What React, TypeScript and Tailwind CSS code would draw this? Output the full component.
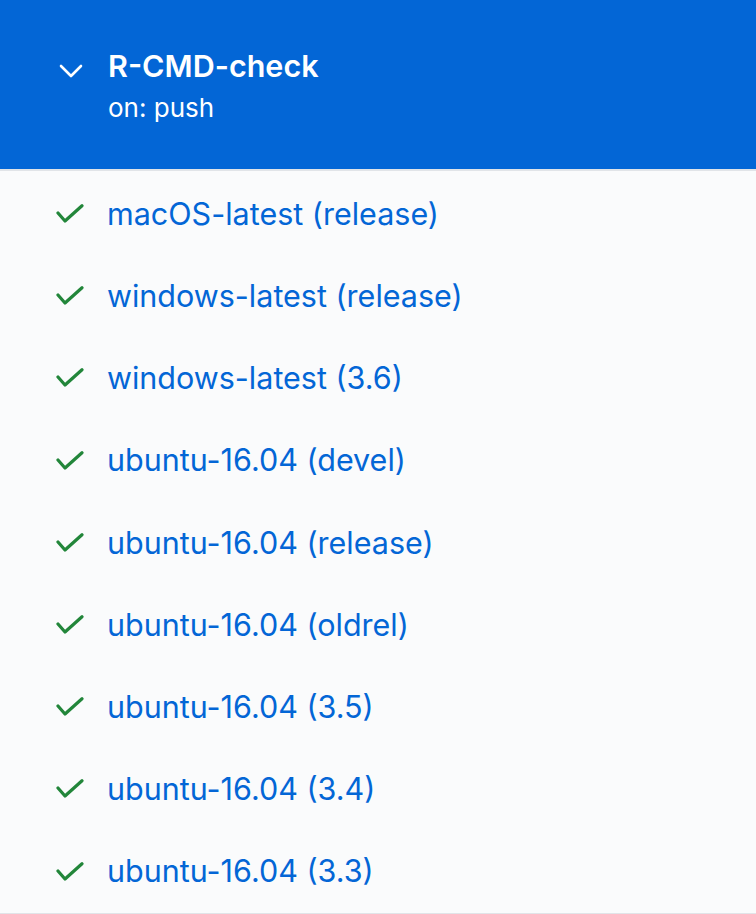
import React from "react";

/* =======================
   DATA
======================= */

const jobs = [
  "macOS-latest (release)",
  "windows-latest (release)",
  "windows-latest (3.6)",
  "ubuntu-16.04 (devel)",
  "ubuntu-16.04 (release)",
  "ubuntu-16.04 (oldrel)",
  "ubuntu-16.04 (3.5)",
  "ubuntu-16.04 (3.4)",
  "ubuntu-16.04 (3.3)",
];

/* =======================
   ICONS
======================= */

function ChevronDown() {
  return (
    <svg width="24" height="16" viewBox="0 0 24 16" fill="none">
      <polyline
        points="2,3 12,13 22,3"
        stroke="white"
        strokeWidth="2.6"
        strokeLinecap="round"
        strokeLinejoin="round"
      />
    </svg>
  );
}

function Check() {
  return (
    <svg width="28" height="20" viewBox="0 0 28 20" fill="none">
      <polyline
        points="2,9 9,17 26,1.8"
        stroke="#22863a"
        strokeWidth="3.2"
        strokeLinecap="round"
        strokeLinejoin="round"
      />
    </svg>
  );
}

/* =======================
   PAGE
======================= */

export default function App() {
  return (
    <div
      className="min-h-screen w-[756px] bg-[#fafbfc]"
      style={{ fontFamily: "Inter, 'Liberation Sans', sans-serif" }}
    >
      {/* ===== HEADER ===== */}
      <header className="flex h-[171px] items-start gap-[25px] border-b-2 border-[#e1e4e8] bg-[#0366d6] pl-[59px] pt-[47px]">
        <div className="pt-[16px]">
          <ChevronDown />
        </div>
        <div className="flex flex-col text-white">
          <h1 className="text-[30.5px] font-semibold leading-[38px]">
            R-CMD-check
          </h1>
          <p className="mt-[7px] text-[26px] leading-[32px]">on: push</p>
        </div>
      </header>

      {/* ===== JOBS ===== */}
      <ul className="border-b-2 border-[#e1e4e8] pt-[2px]">
        {jobs.map((job) => (
          <li
            key={job}
            className="flex h-[82.2px] items-center gap-[23px] pl-[56px]"
          >
            <Check />
            <span className="text-[30.5px] leading-none text-[#0366d6]">
              {job}
            </span>
          </li>
        ))}
      </ul>
    </div>
  );
}
